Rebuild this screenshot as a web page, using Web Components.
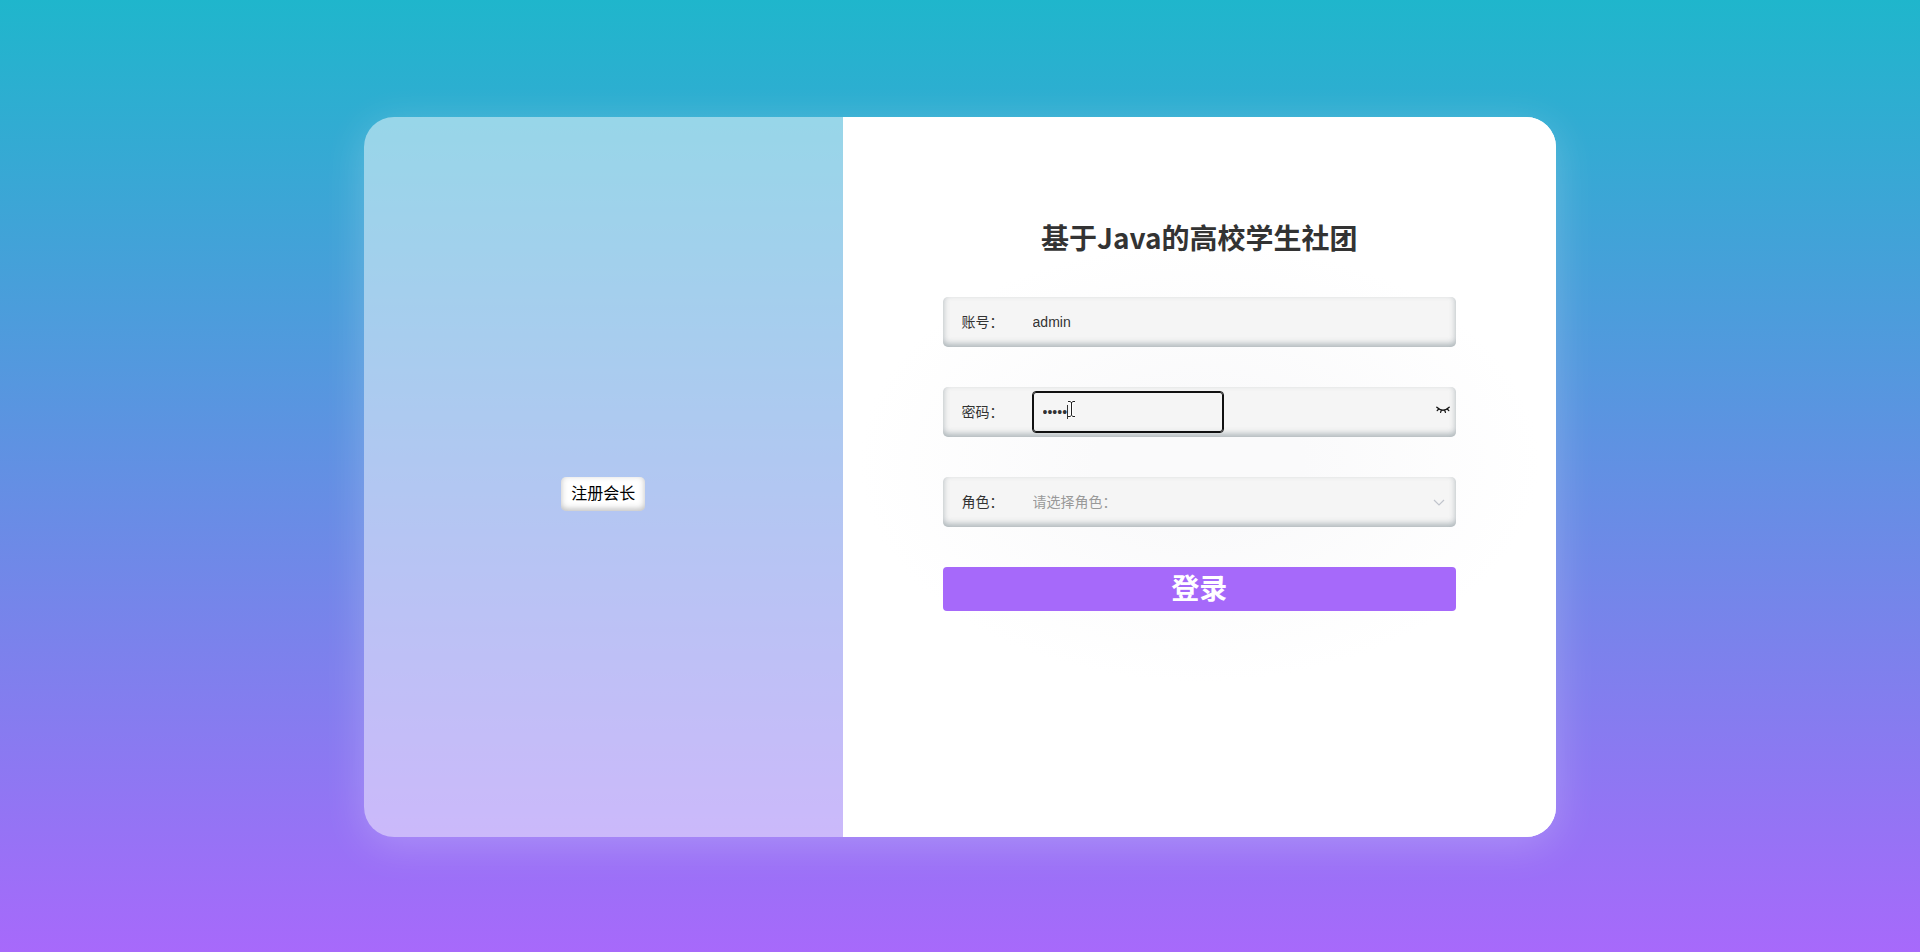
<!DOCTYPE html>
<html lang="zh-CN">
<head>
<meta charset="utf-8">
<title>登录</title>
<style>
html, body { height: 100%; margin: 0; }
body { font-family: "Liberation Sans", "Noto Sans CJK SC", sans-serif; font-size: 14px; color: #333; }
</style>
</head>
<body>
<login-page></login-page>
<script>
const define = (name, html, setup) => customElements.define(name, class extends HTMLElement {
  connectedCallback() {
    if (this.shadowRoot) return;
    const root = this.attachShadow({ mode: 'open' });
    root.innerHTML = html;
    if (setup) setup.call(this, root);
  }
});

const rowStyle = `
  :host { display: block; }
  .row { position: relative; display: flex; align-items: center; height: 50px; box-sizing: border-box; padding-left: 19px;
    border-radius: 5px; background: #f5f5f5; box-shadow: inset 0 -3px 6px rgba(70, 90, 100, .42); }
  label { width: 71px; flex: none; line-height: 20px; }
  input, select { font: inherit; color: inherit; background: none; border: 0; box-sizing: border-box; }
`;

define('text-field', `<style>${rowStyle}
  input { flex: 1; min-width: 0; height: 42px; padding: 0; outline: none; }
</style><div class="row"><label for="f"></label><input id="f" type="text"></div>`, function (root) {
  root.querySelector('label').textContent = this.getAttribute('label');
  root.querySelector('input').value = this.getAttribute('value');
});

define('password-field', `<style>${rowStyle}
  input { width: 190px; height: 40px; padding: 0 9px; border: 1px solid #111; border-radius: 3px; outline: 1px solid #111; }
  .eye { display: flex; margin-left: auto; padding: 0 6px 5px 0; border: 0; background: none; color: #111; }
  .cursor { position: absolute; left: 124px; top: 13px; }
</style><div class="row"><label for="f"></label><input id="f" type="password">
<button class="eye" type="button" aria-label="显示密码"><svg width="14" height="8" viewBox="0 0 14 8" fill="none" stroke="currentColor" stroke-width="1.3" stroke-linecap="round"><path d="M.8 1.3Q7 7.2 13.2 1.3M2.5 3.2 1.2 4.6M5.2 4.6 4.6 6.4M8.8 4.6l.6 1.8M11.5 3.2l1.3 1.4"/></svg></button>
<svg class="cursor" width="10" height="20" viewBox="0 0 10 20" fill="none"><path d="M.5 5v14" stroke="#333"/><path d="M1 2h7M4.5 2v14M1 16h7" stroke="#fff" stroke-width="3"/><path d="M1 1.5h2l1.5 1 1.5-1h2M4.500 2v13M1 16.500h2l1.500-1 1.500 1h2" stroke="#222"/></svg></div>`, function (root) {
  root.querySelector('label').textContent = this.getAttribute('label');
  root.querySelector('input').value = this.getAttribute('value');
});

define('select-field', `<style>${rowStyle}
  select { appearance: none; flex: 1; min-width: 0; height: 42px; padding: 0; color: #999; outline: none; }
  svg { position: absolute; right: 11px; top: 22px; pointer-events: none; }
</style><div class="row"><label for="f"></label><select id="f"><option></option></select>
<svg width="12" height="8" viewBox="0 0 12 8" fill="none" stroke="#c0c4cc" stroke-width="1.2"><path d="M1 1l5 5 5-5"/></svg></div>`, function (root) {
  root.querySelector('label').textContent = this.getAttribute('label');
  root.querySelector('option').textContent = this.getAttribute('placeholder');
});

define('register-button', `<style>
  :host { display: block; }
  button { display: block; height: 34px; padding: 0 10px; border: 0; border-radius: 5px; background: #fff; color: #000;
    font: 16px/32px "Liberation Sans", "Noto Sans CJK SC", sans-serif; box-shadow: inset 0 -2px 6px rgba(90, 90, 90, .4); }
</style><button type="button"><slot></slot></button>`);

define('login-form', `<style>
  :host { display: block; }
  form { display: flex; flex-direction: column; gap: 40px; }
  h1 { margin: 0; text-align: center; font: bold 28px/40px "Noto Sans CJK SC", sans-serif; color: #333; }
  .submit { height: 44px; padding: 0 0 4px; border: 0; border-radius: 4px; background: #a669fa; color: #fff;
    font: bold 28px/40px "Noto Sans CJK SC", sans-serif; }
</style><form>
  <h1>基于Java的高校学生社团</h1>
  <text-field label="账号：" value="admin"></text-field>
  <password-field label="密码：" value="admin"></password-field>
  <select-field label="角色：" placeholder="请选择角色："></select-field>
  <button class="submit" type="button">登录</button>
</form>`);

define('login-page', `<style>
  :host { display: flex; align-items: flex-start; justify-content: center; min-height: 100vh; box-sizing: border-box; padding: 117px 0 115px;
    background: linear-gradient(#1fb6cc, #a769fb); }
  main { display: grid; grid-template-columns: 479fr 714fr; width: 62.1%; min-height: 720px; border-radius: 30px; overflow: hidden;
    box-shadow: 0 8px 40px rgba(255, 255, 255, .22); }
  .side { display: grid; place-items: center; padding-top: 34px; background: rgba(255, 255, 255, .5); }
  .panel { padding: 100px 100px 0; background: radial-gradient(340px 220px at 50% 345px, #fafafb 30%, #fff) #fff; }
</style><main>
  <section class="side"><register-button>注册会长</register-button></section>
  <section class="panel"><login-form></login-form></section>
</main>`);
</script>
</body>
</html>
